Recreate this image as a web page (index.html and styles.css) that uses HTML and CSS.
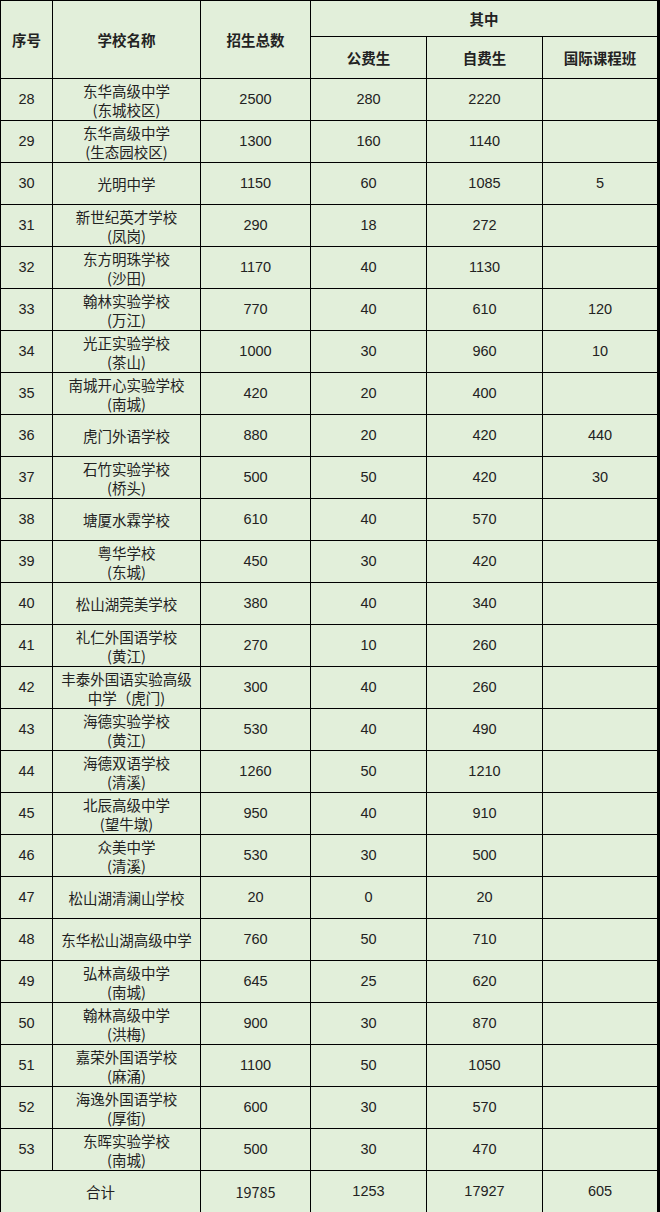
FILE: index.html
```html
<!DOCTYPE html>
<html lang="zh">
<head>
<meta charset="utf-8">
<link rel="stylesheet" href="styles.css">
</head>
<body>
<table class="grid">
<colgroup>
<col class="c1"><col class="c2"><col class="c3"><col class="c4"><col class="c5"><col class="c6">
</colgroup>
<thead>
<tr class="h1">
<th rowspan="2">序号</th><th rowspan="2">学校名称</th><th rowspan="2">招生总数</th><th colspan="3">其中</th>
</tr>
<tr class="h2">
<th>公费生</th><th>自费生</th><th>国际课程班</th>
</tr>
</thead>
<tbody>
<tr><td>28</td><td>东华高级中学<br>(东城校区)</td><td>2500</td><td>280</td><td>2220</td><td></td></tr>
<tr><td>29</td><td>东华高级中学<br>(生态园校区)</td><td>1300</td><td>160</td><td>1140</td><td></td></tr>
<tr><td>30</td><td>光明中学</td><td>1150</td><td>60</td><td>1085</td><td>5</td></tr>
<tr><td>31</td><td>新世纪英才学校<br>(凤岗)</td><td>290</td><td>18</td><td>272</td><td></td></tr>
<tr><td>32</td><td>东方明珠学校<br>(沙田)</td><td>1170</td><td>40</td><td>1130</td><td></td></tr>
<tr><td>33</td><td>翰林实验学校<br>(万江)</td><td>770</td><td>40</td><td>610</td><td>120</td></tr>
<tr><td>34</td><td>光正实验学校<br>(茶山)</td><td>1000</td><td>30</td><td>960</td><td>10</td></tr>
<tr><td>35</td><td>南城开心实验学校<br>(南城)</td><td>420</td><td>20</td><td>400</td><td></td></tr>
<tr><td>36</td><td>虎门外语学校</td><td>880</td><td>20</td><td>420</td><td>440</td></tr>
<tr><td>37</td><td>石竹实验学校<br>(桥头)</td><td>500</td><td>50</td><td>420</td><td>30</td></tr>
<tr><td>38</td><td>塘厦水霖学校</td><td>610</td><td>40</td><td>570</td><td></td></tr>
<tr><td>39</td><td>粤华学校<br>(东城)</td><td>450</td><td>30</td><td>420</td><td></td></tr>
<tr><td>40</td><td>松山湖莞美学校</td><td>380</td><td>40</td><td>340</td><td></td></tr>
<tr><td>41</td><td>礼仁外国语学校<br>(黄江)</td><td>270</td><td>10</td><td>260</td><td></td></tr>
<tr><td>42</td><td>丰泰外国语实验高级<br>中学（虎门)</td><td>300</td><td>40</td><td>260</td><td></td></tr>
<tr><td>43</td><td>海德实验学校<br>(黄江)</td><td>530</td><td>40</td><td>490</td><td></td></tr>
<tr><td>44</td><td>海德双语学校<br>(清溪)</td><td>1260</td><td>50</td><td>1210</td><td></td></tr>
<tr><td>45</td><td>北辰高级中学<br>(望牛墩)</td><td>950</td><td>40</td><td>910</td><td></td></tr>
<tr><td>46</td><td>众美中学<br>(清溪)</td><td>530</td><td>30</td><td>500</td><td></td></tr>
<tr><td>47</td><td>松山湖清澜山学校</td><td>20</td><td>0</td><td>20</td><td></td></tr>
<tr><td>48</td><td>东华松山湖高级中学</td><td>760</td><td>50</td><td>710</td><td></td></tr>
<tr><td>49</td><td>弘林高级中学<br>(南城)</td><td>645</td><td>25</td><td>620</td><td></td></tr>
<tr><td>50</td><td>翰林高级中学<br>(洪梅)</td><td>900</td><td>30</td><td>870</td><td></td></tr>
<tr><td>51</td><td>嘉荣外国语学校<br>(麻涌)</td><td>1100</td><td>50</td><td>1050</td><td></td></tr>
<tr><td>52</td><td>海逸外国语学校<br>(厚街)</td><td>600</td><td>30</td><td>570</td><td></td></tr>
<tr><td>53</td><td>东晖实验学校<br>(南城)</td><td>500</td><td>30</td><td>470</td><td></td></tr>
<tr class="total"><td colspan="2">合计</td><td>19785</td><td>1253</td><td>17927</td><td>605</td></tr>
</tbody>
</table>
</body>
</html>
```

FILE: styles.css
```css
html, body {
  margin: 0;
  padding: 0;
  background: #000;
}
body {
  width: 660px;
  height: 1212px;
  overflow: hidden;
}
.grid {
  table-layout: fixed;
  border-collapse: collapse;
  width: 657px;
  background: #e2efda;
  font-family: "Liberation Sans", "Noto Sans CJK SC", sans-serif;
  font-size: 14.5px;
  color: #222;
}
.c1 { width: 52px; }
.c2 { width: 148px; }
.c3 { width: 110px; }
.c4 { width: 116px; }
.c5 { width: 116px; }
.c6 { width: 115px; }
.grid th, .grid td {
  border: 1px solid #000;
  padding: 0;
  text-align: center;
  vertical-align: middle;
  line-height: 19px;
}
.grid th {
  font-weight: bold;
  font-family: "Noto Sans CJK SC", sans-serif;
}
.h1 { height: 36px; }
.h2 { height: 42px; }
.grid tbody tr { height: 42px; }
.grid tbody td:nth-child(2) {
  font-family: "Noto Sans CJK SC", sans-serif;
}
.total td:first-child {
  font-family: "Noto Sans CJK SC", sans-serif;
}
```
